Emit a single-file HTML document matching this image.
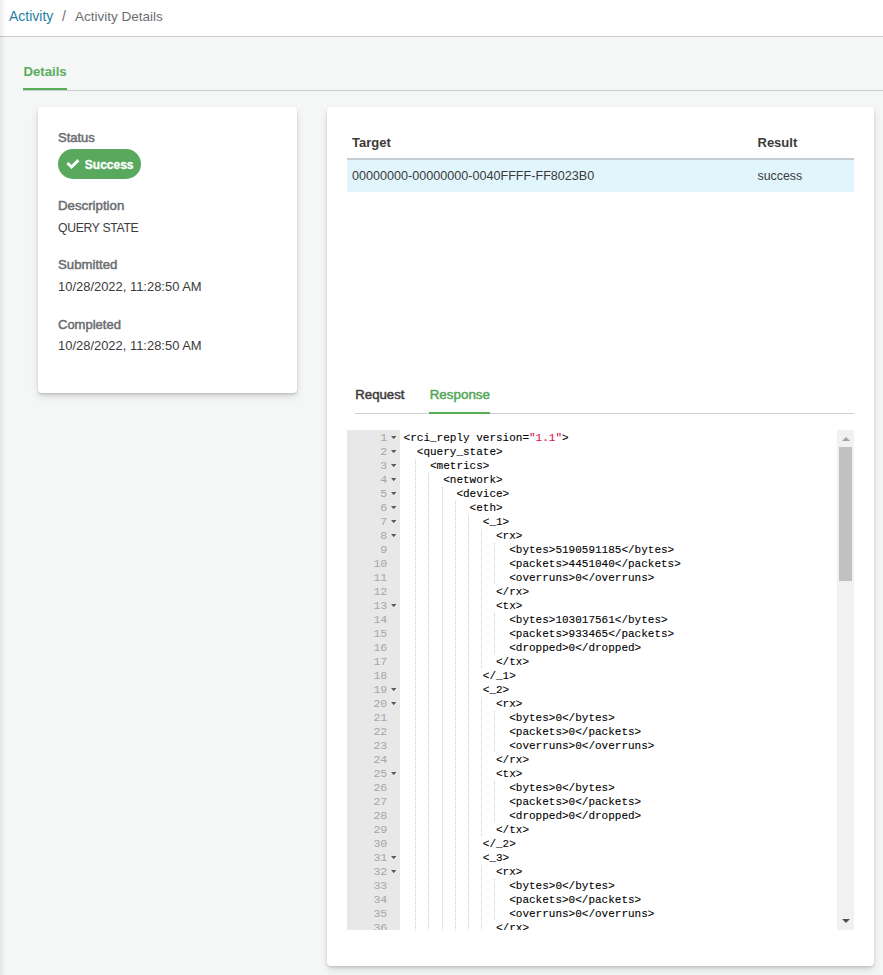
<!DOCTYPE html>
<html><head><meta charset="utf-8"><style>
html,body{margin:0;padding:0}
body{width:883px;height:975px;overflow:hidden;position:relative;background:#f5f6f6;font-family:'Liberation Sans', sans-serif}
.t{position:absolute;white-space:nowrap}
.card{position:absolute;background:#fff;border-radius:4px;box-shadow:0 2px 3px rgba(0,0,0,.1),0 4px 8px rgba(0,0,0,.1),0 1px 2px rgba(0,0,0,.06)}
.ln{position:absolute;left:0;width:40.3px;text-align:right;height:14px;line-height:14px;font-family:'Liberation Mono', monospace;font-size:11.6px;color:#a6a6a6}
.fold{position:absolute;left:44px}
.cl{position:absolute;white-space:pre;height:14px;line-height:14px;font-family:'Liberation Mono', monospace;font-size:11px;color:#000;-webkit-text-stroke-width:0.1px}
.ig{position:absolute;width:1px;height:14px;background-image:linear-gradient(to bottom,#ccc 50%,transparent 50%);background-size:1px 2px;background-position:0 1px}
.lshadow{position:absolute;left:0;top:0;width:6px;height:975px;background:linear-gradient(to right,rgba(0,0,0,.07),rgba(0,0,0,0))}
</style></head><body>
<div style="position:absolute;left:0;top:0;width:883px;height:36px;background:#fff;border-bottom:1px solid #c9ced2"></div><div class="t" style="left:9px;top:7.25px;font-size:14px;line-height:18px;font-weight:normal;color:#1f7ea3;font-family:'Liberation Sans', sans-serif;">Activity</div>
<div class="t" style="left:62px;top:7.25px;font-size:14px;line-height:18px;font-weight:normal;color:#6b6e72;font-family:'Liberation Sans', sans-serif;">/</div>
<div class="t" style="left:75px;top:7.92px;font-size:13.5px;line-height:17px;font-weight:normal;color:#6b6e72;font-family:'Liberation Sans', sans-serif;">Activity Details</div>
<div class="t" style="left:23.4px;top:64.23px;font-size:13.2px;line-height:16px;font-weight:bold;color:#5aad5e;font-family:'Liberation Sans', sans-serif;">Details</div>
<div style="position:absolute;left:23px;top:90px;width:860px;height:1px;background:#c9cdd1"></div><div style="position:absolute;left:23px;top:88px;width:44px;height:2px;background:#55ad5a"></div><div class="card" style="left:38px;top:107px;width:259px;height:286px"></div><div class="t" style="left:58px;top:129.90px;font-size:13px;line-height:16px;font-weight:normal;color:#6a6e72;font-family:'Liberation Sans', sans-serif;-webkit-text-stroke-width:0.5px">Status</div>
<div style="position:absolute;left:58px;top:149px;width:83px;height:30px;border-radius:15px;background:#58a95e"></div><svg style="position:absolute;left:60px;top:155px" width="25" height="20" viewBox="60 155 25 20"><path fill="#fff" d="M68.5 162 L71.5 165 L77.4 159.1 L79.45 161.15 L71.5 169.1 L66.45 164.05 Z"/></svg><div class="t" style="left:84.8px;top:157.64px;font-size:12px;line-height:15px;font-weight:bold;color:#fff;font-family:'Liberation Sans', sans-serif;-webkit-text-stroke-width:0.3px">Success</div>
<div class="t" style="left:58px;top:196.91px;font-size:13.25px;line-height:17px;font-weight:normal;color:#6a6e72;font-family:'Liberation Sans', sans-serif;-webkit-text-stroke-width:0.5px">Description</div>
<div class="t" style="left:58px;top:221.27px;font-size:12.2px;line-height:15px;font-weight:normal;color:#3b3b3b;font-family:'Liberation Sans', sans-serif;letter-spacing:-0.3px">QUERY STATE</div>
<div class="t" style="left:58px;top:257.43px;font-size:13.2px;line-height:16px;font-weight:normal;color:#6a6e72;font-family:'Liberation Sans', sans-serif;-webkit-text-stroke-width:0.5px">Submitted</div>
<div class="t" style="left:58px;top:279.31px;font-size:12.95px;line-height:16px;font-weight:normal;color:#3b3b3b;font-family:'Liberation Sans', sans-serif;">10/28/2022, 11:28:50 AM</div>
<div class="t" style="left:58px;top:316.70px;font-size:13px;line-height:16px;font-weight:normal;color:#6a6e72;font-family:'Liberation Sans', sans-serif;-webkit-text-stroke-width:0.5px">Completed</div>
<div class="t" style="left:58px;top:338.31px;font-size:12.95px;line-height:16px;font-weight:normal;color:#3b3b3b;font-family:'Liberation Sans', sans-serif;">10/28/2022, 11:28:50 AM</div>
<div class="card" style="left:327px;top:107px;width:547px;height:859px"></div><div class="t" style="left:352px;top:135.40px;font-size:13px;line-height:16px;font-weight:bold;color:#3b3b3b;font-family:'Liberation Sans', sans-serif;">Target</div>
<div class="t" style="left:757.5px;top:135.40px;font-size:13px;line-height:16px;font-weight:bold;color:#3b3b3b;font-family:'Liberation Sans', sans-serif;">Result</div>
<div style="position:absolute;left:347px;top:158px;width:507px;height:2px;background:#c6ccd4"></div><div style="position:absolute;left:347px;top:160px;width:507px;height:32px;background:#e1f5fd"></div><div class="t" style="left:352px;top:168.13px;font-size:12.6px;line-height:16px;font-weight:normal;color:#3b3b3b;font-family:'Liberation Sans', sans-serif;">00000000-00000000-0040FFFF-FF8023B0</div>
<div class="t" style="left:757.5px;top:168.20px;font-size:12.4px;line-height:16px;font-weight:normal;color:#3b3b3b;font-family:'Liberation Sans', sans-serif;">success</div>
<div class="t" style="left:355.3px;top:386.83px;font-size:13.2px;line-height:16px;font-weight:normal;color:#3d3d3d;font-family:'Liberation Sans', sans-serif;-webkit-text-stroke-width:0.5px">Request</div>
<div class="t" style="left:429.7px;top:386.26px;font-size:13.4px;line-height:17px;font-weight:normal;color:#53a858;font-family:'Liberation Sans', sans-serif;-webkit-text-stroke-width:0.5px">Response</div>
<div style="position:absolute;left:355px;top:413px;width:499px;height:1px;background:#ccd1d8"></div><div style="position:absolute;left:429px;top:412px;width:61px;height:2px;background:#55ad5a"></div><div style="position:absolute;left:347px;top:430px;width:507px;height:500px;background:#fff;overflow:hidden"><div style="position:absolute;left:0;top:0;width:53px;height:500px;background:#e8e8e8"></div><div class="ln" style="top:0.8px">1</div><svg class="fold" style="top:6px" width="5.4" height="3.2" viewBox="0 0 5.4 3.2"><path d="M0 0H5.4L2.7 3.2Z" fill="#5c5c5c"/></svg><div class="cl" style="top:1px;left:56.60px">&lt;rci_reply version=<span style="color:#d14">"1.1"</span>&gt;</div><div class="ln" style="top:14.8px">2</div><svg class="fold" style="top:20px" width="5.4" height="3.2" viewBox="0 0 5.4 3.2"><path d="M0 0H5.4L2.7 3.2Z" fill="#5c5c5c"/></svg><div class="cl" style="top:15px;left:69.80px">&lt;query_state&gt;</div><div class="ln" style="top:28.8px">3</div><svg class="fold" style="top:34px" width="5.4" height="3.2" viewBox="0 0 5.4 3.2"><path d="M0 0H5.4L2.7 3.2Z" fill="#5c5c5c"/></svg><div class="cl" style="top:29px;left:83.00px">&lt;metrics&gt;</div><div class="ig" style="top:28px;left:68.00px"></div><div class="ln" style="top:42.8px">4</div><svg class="fold" style="top:48px" width="5.4" height="3.2" viewBox="0 0 5.4 3.2"><path d="M0 0H5.4L2.7 3.2Z" fill="#5c5c5c"/></svg><div class="cl" style="top:43px;left:96.20px">&lt;network&gt;</div><div class="ig" style="top:42px;left:68.00px"></div><div class="ig" style="top:42px;left:81.00px"></div><div class="ln" style="top:56.8px">5</div><svg class="fold" style="top:62px" width="5.4" height="3.2" viewBox="0 0 5.4 3.2"><path d="M0 0H5.4L2.7 3.2Z" fill="#5c5c5c"/></svg><div class="cl" style="top:57px;left:109.40px">&lt;device&gt;</div><div class="ig" style="top:56px;left:68.00px"></div><div class="ig" style="top:56px;left:81.00px"></div><div class="ig" style="top:56px;left:95.00px"></div><div class="ln" style="top:70.8px">6</div><svg class="fold" style="top:76px" width="5.4" height="3.2" viewBox="0 0 5.4 3.2"><path d="M0 0H5.4L2.7 3.2Z" fill="#5c5c5c"/></svg><div class="cl" style="top:71px;left:122.60px">&lt;eth&gt;</div><div class="ig" style="top:70px;left:68.00px"></div><div class="ig" style="top:70px;left:81.00px"></div><div class="ig" style="top:70px;left:95.00px"></div><div class="ig" style="top:70px;left:108.00px"></div><div class="ln" style="top:84.8px">7</div><svg class="fold" style="top:90px" width="5.4" height="3.2" viewBox="0 0 5.4 3.2"><path d="M0 0H5.4L2.7 3.2Z" fill="#5c5c5c"/></svg><div class="cl" style="top:85px;left:135.80px">&lt;_1&gt;</div><div class="ig" style="top:84px;left:68.00px"></div><div class="ig" style="top:84px;left:81.00px"></div><div class="ig" style="top:84px;left:95.00px"></div><div class="ig" style="top:84px;left:108.00px"></div><div class="ig" style="top:84px;left:121.00px"></div><div class="ln" style="top:98.8px">8</div><svg class="fold" style="top:104px" width="5.4" height="3.2" viewBox="0 0 5.4 3.2"><path d="M0 0H5.4L2.7 3.2Z" fill="#5c5c5c"/></svg><div class="cl" style="top:99px;left:149.00px">&lt;rx&gt;</div><div class="ig" style="top:98px;left:68.00px"></div><div class="ig" style="top:98px;left:81.00px"></div><div class="ig" style="top:98px;left:95.00px"></div><div class="ig" style="top:98px;left:108.00px"></div><div class="ig" style="top:98px;left:121.00px"></div><div class="ig" style="top:98px;left:134.00px"></div><div class="ln" style="top:112.8px">9</div><div class="cl" style="top:113px;left:162.20px">&lt;bytes&gt;5190591185&lt;/bytes&gt;</div><div class="ig" style="top:112px;left:68.00px"></div><div class="ig" style="top:112px;left:81.00px"></div><div class="ig" style="top:112px;left:95.00px"></div><div class="ig" style="top:112px;left:108.00px"></div><div class="ig" style="top:112px;left:121.00px"></div><div class="ig" style="top:112px;left:134.00px"></div><div class="ig" style="top:112px;left:147.00px"></div><div class="ln" style="top:126.8px">10</div><div class="cl" style="top:127px;left:162.20px">&lt;packets&gt;4451040&lt;/packets&gt;</div><div class="ig" style="top:126px;left:68.00px"></div><div class="ig" style="top:126px;left:81.00px"></div><div class="ig" style="top:126px;left:95.00px"></div><div class="ig" style="top:126px;left:108.00px"></div><div class="ig" style="top:126px;left:121.00px"></div><div class="ig" style="top:126px;left:134.00px"></div><div class="ig" style="top:126px;left:147.00px"></div><div class="ln" style="top:140.8px">11</div><div class="cl" style="top:141px;left:162.20px">&lt;overruns&gt;0&lt;/overruns&gt;</div><div class="ig" style="top:140px;left:68.00px"></div><div class="ig" style="top:140px;left:81.00px"></div><div class="ig" style="top:140px;left:95.00px"></div><div class="ig" style="top:140px;left:108.00px"></div><div class="ig" style="top:140px;left:121.00px"></div><div class="ig" style="top:140px;left:134.00px"></div><div class="ig" style="top:140px;left:147.00px"></div><div class="ln" style="top:154.8px">12</div><div class="cl" style="top:155px;left:149.00px">&lt;/rx&gt;</div><div class="ig" style="top:154px;left:68.00px"></div><div class="ig" style="top:154px;left:81.00px"></div><div class="ig" style="top:154px;left:95.00px"></div><div class="ig" style="top:154px;left:108.00px"></div><div class="ig" style="top:154px;left:121.00px"></div><div class="ig" style="top:154px;left:134.00px"></div><div class="ln" style="top:168.8px">13</div><svg class="fold" style="top:174px" width="5.4" height="3.2" viewBox="0 0 5.4 3.2"><path d="M0 0H5.4L2.7 3.2Z" fill="#5c5c5c"/></svg><div class="cl" style="top:169px;left:149.00px">&lt;tx&gt;</div><div class="ig" style="top:168px;left:68.00px"></div><div class="ig" style="top:168px;left:81.00px"></div><div class="ig" style="top:168px;left:95.00px"></div><div class="ig" style="top:168px;left:108.00px"></div><div class="ig" style="top:168px;left:121.00px"></div><div class="ig" style="top:168px;left:134.00px"></div><div class="ln" style="top:182.8px">14</div><div class="cl" style="top:183px;left:162.20px">&lt;bytes&gt;103017561&lt;/bytes&gt;</div><div class="ig" style="top:182px;left:68.00px"></div><div class="ig" style="top:182px;left:81.00px"></div><div class="ig" style="top:182px;left:95.00px"></div><div class="ig" style="top:182px;left:108.00px"></div><div class="ig" style="top:182px;left:121.00px"></div><div class="ig" style="top:182px;left:134.00px"></div><div class="ig" style="top:182px;left:147.00px"></div><div class="ln" style="top:196.8px">15</div><div class="cl" style="top:197px;left:162.20px">&lt;packets&gt;933465&lt;/packets&gt;</div><div class="ig" style="top:196px;left:68.00px"></div><div class="ig" style="top:196px;left:81.00px"></div><div class="ig" style="top:196px;left:95.00px"></div><div class="ig" style="top:196px;left:108.00px"></div><div class="ig" style="top:196px;left:121.00px"></div><div class="ig" style="top:196px;left:134.00px"></div><div class="ig" style="top:196px;left:147.00px"></div><div class="ln" style="top:210.8px">16</div><div class="cl" style="top:211px;left:162.20px">&lt;dropped&gt;0&lt;/dropped&gt;</div><div class="ig" style="top:210px;left:68.00px"></div><div class="ig" style="top:210px;left:81.00px"></div><div class="ig" style="top:210px;left:95.00px"></div><div class="ig" style="top:210px;left:108.00px"></div><div class="ig" style="top:210px;left:121.00px"></div><div class="ig" style="top:210px;left:134.00px"></div><div class="ig" style="top:210px;left:147.00px"></div><div class="ln" style="top:224.8px">17</div><div class="cl" style="top:225px;left:149.00px">&lt;/tx&gt;</div><div class="ig" style="top:224px;left:68.00px"></div><div class="ig" style="top:224px;left:81.00px"></div><div class="ig" style="top:224px;left:95.00px"></div><div class="ig" style="top:224px;left:108.00px"></div><div class="ig" style="top:224px;left:121.00px"></div><div class="ig" style="top:224px;left:134.00px"></div><div class="ln" style="top:238.8px">18</div><div class="cl" style="top:239px;left:135.80px">&lt;/_1&gt;</div><div class="ig" style="top:238px;left:68.00px"></div><div class="ig" style="top:238px;left:81.00px"></div><div class="ig" style="top:238px;left:95.00px"></div><div class="ig" style="top:238px;left:108.00px"></div><div class="ig" style="top:238px;left:121.00px"></div><div class="ln" style="top:252.8px">19</div><svg class="fold" style="top:258px" width="5.4" height="3.2" viewBox="0 0 5.4 3.2"><path d="M0 0H5.4L2.7 3.2Z" fill="#5c5c5c"/></svg><div class="cl" style="top:253px;left:135.80px">&lt;_2&gt;</div><div class="ig" style="top:252px;left:68.00px"></div><div class="ig" style="top:252px;left:81.00px"></div><div class="ig" style="top:252px;left:95.00px"></div><div class="ig" style="top:252px;left:108.00px"></div><div class="ig" style="top:252px;left:121.00px"></div><div class="ln" style="top:266.8px">20</div><svg class="fold" style="top:272px" width="5.4" height="3.2" viewBox="0 0 5.4 3.2"><path d="M0 0H5.4L2.7 3.2Z" fill="#5c5c5c"/></svg><div class="cl" style="top:267px;left:149.00px">&lt;rx&gt;</div><div class="ig" style="top:266px;left:68.00px"></div><div class="ig" style="top:266px;left:81.00px"></div><div class="ig" style="top:266px;left:95.00px"></div><div class="ig" style="top:266px;left:108.00px"></div><div class="ig" style="top:266px;left:121.00px"></div><div class="ig" style="top:266px;left:134.00px"></div><div class="ln" style="top:280.8px">21</div><div class="cl" style="top:281px;left:162.20px">&lt;bytes&gt;0&lt;/bytes&gt;</div><div class="ig" style="top:280px;left:68.00px"></div><div class="ig" style="top:280px;left:81.00px"></div><div class="ig" style="top:280px;left:95.00px"></div><div class="ig" style="top:280px;left:108.00px"></div><div class="ig" style="top:280px;left:121.00px"></div><div class="ig" style="top:280px;left:134.00px"></div><div class="ig" style="top:280px;left:147.00px"></div><div class="ln" style="top:294.8px">22</div><div class="cl" style="top:295px;left:162.20px">&lt;packets&gt;0&lt;/packets&gt;</div><div class="ig" style="top:294px;left:68.00px"></div><div class="ig" style="top:294px;left:81.00px"></div><div class="ig" style="top:294px;left:95.00px"></div><div class="ig" style="top:294px;left:108.00px"></div><div class="ig" style="top:294px;left:121.00px"></div><div class="ig" style="top:294px;left:134.00px"></div><div class="ig" style="top:294px;left:147.00px"></div><div class="ln" style="top:308.8px">23</div><div class="cl" style="top:309px;left:162.20px">&lt;overruns&gt;0&lt;/overruns&gt;</div><div class="ig" style="top:308px;left:68.00px"></div><div class="ig" style="top:308px;left:81.00px"></div><div class="ig" style="top:308px;left:95.00px"></div><div class="ig" style="top:308px;left:108.00px"></div><div class="ig" style="top:308px;left:121.00px"></div><div class="ig" style="top:308px;left:134.00px"></div><div class="ig" style="top:308px;left:147.00px"></div><div class="ln" style="top:322.8px">24</div><div class="cl" style="top:323px;left:149.00px">&lt;/rx&gt;</div><div class="ig" style="top:322px;left:68.00px"></div><div class="ig" style="top:322px;left:81.00px"></div><div class="ig" style="top:322px;left:95.00px"></div><div class="ig" style="top:322px;left:108.00px"></div><div class="ig" style="top:322px;left:121.00px"></div><div class="ig" style="top:322px;left:134.00px"></div><div class="ln" style="top:336.8px">25</div><svg class="fold" style="top:342px" width="5.4" height="3.2" viewBox="0 0 5.4 3.2"><path d="M0 0H5.4L2.7 3.2Z" fill="#5c5c5c"/></svg><div class="cl" style="top:337px;left:149.00px">&lt;tx&gt;</div><div class="ig" style="top:336px;left:68.00px"></div><div class="ig" style="top:336px;left:81.00px"></div><div class="ig" style="top:336px;left:95.00px"></div><div class="ig" style="top:336px;left:108.00px"></div><div class="ig" style="top:336px;left:121.00px"></div><div class="ig" style="top:336px;left:134.00px"></div><div class="ln" style="top:350.8px">26</div><div class="cl" style="top:351px;left:162.20px">&lt;bytes&gt;0&lt;/bytes&gt;</div><div class="ig" style="top:350px;left:68.00px"></div><div class="ig" style="top:350px;left:81.00px"></div><div class="ig" style="top:350px;left:95.00px"></div><div class="ig" style="top:350px;left:108.00px"></div><div class="ig" style="top:350px;left:121.00px"></div><div class="ig" style="top:350px;left:134.00px"></div><div class="ig" style="top:350px;left:147.00px"></div><div class="ln" style="top:364.8px">27</div><div class="cl" style="top:365px;left:162.20px">&lt;packets&gt;0&lt;/packets&gt;</div><div class="ig" style="top:364px;left:68.00px"></div><div class="ig" style="top:364px;left:81.00px"></div><div class="ig" style="top:364px;left:95.00px"></div><div class="ig" style="top:364px;left:108.00px"></div><div class="ig" style="top:364px;left:121.00px"></div><div class="ig" style="top:364px;left:134.00px"></div><div class="ig" style="top:364px;left:147.00px"></div><div class="ln" style="top:378.8px">28</div><div class="cl" style="top:379px;left:162.20px">&lt;dropped&gt;0&lt;/dropped&gt;</div><div class="ig" style="top:378px;left:68.00px"></div><div class="ig" style="top:378px;left:81.00px"></div><div class="ig" style="top:378px;left:95.00px"></div><div class="ig" style="top:378px;left:108.00px"></div><div class="ig" style="top:378px;left:121.00px"></div><div class="ig" style="top:378px;left:134.00px"></div><div class="ig" style="top:378px;left:147.00px"></div><div class="ln" style="top:392.8px">29</div><div class="cl" style="top:393px;left:149.00px">&lt;/tx&gt;</div><div class="ig" style="top:392px;left:68.00px"></div><div class="ig" style="top:392px;left:81.00px"></div><div class="ig" style="top:392px;left:95.00px"></div><div class="ig" style="top:392px;left:108.00px"></div><div class="ig" style="top:392px;left:121.00px"></div><div class="ig" style="top:392px;left:134.00px"></div><div class="ln" style="top:406.8px">30</div><div class="cl" style="top:407px;left:135.80px">&lt;/_2&gt;</div><div class="ig" style="top:406px;left:68.00px"></div><div class="ig" style="top:406px;left:81.00px"></div><div class="ig" style="top:406px;left:95.00px"></div><div class="ig" style="top:406px;left:108.00px"></div><div class="ig" style="top:406px;left:121.00px"></div><div class="ln" style="top:420.8px">31</div><svg class="fold" style="top:426px" width="5.4" height="3.2" viewBox="0 0 5.4 3.2"><path d="M0 0H5.4L2.7 3.2Z" fill="#5c5c5c"/></svg><div class="cl" style="top:421px;left:135.80px">&lt;_3&gt;</div><div class="ig" style="top:420px;left:68.00px"></div><div class="ig" style="top:420px;left:81.00px"></div><div class="ig" style="top:420px;left:95.00px"></div><div class="ig" style="top:420px;left:108.00px"></div><div class="ig" style="top:420px;left:121.00px"></div><div class="ln" style="top:434.8px">32</div><svg class="fold" style="top:440px" width="5.4" height="3.2" viewBox="0 0 5.4 3.2"><path d="M0 0H5.4L2.7 3.2Z" fill="#5c5c5c"/></svg><div class="cl" style="top:435px;left:149.00px">&lt;rx&gt;</div><div class="ig" style="top:434px;left:68.00px"></div><div class="ig" style="top:434px;left:81.00px"></div><div class="ig" style="top:434px;left:95.00px"></div><div class="ig" style="top:434px;left:108.00px"></div><div class="ig" style="top:434px;left:121.00px"></div><div class="ig" style="top:434px;left:134.00px"></div><div class="ln" style="top:448.8px">33</div><div class="cl" style="top:449px;left:162.20px">&lt;bytes&gt;0&lt;/bytes&gt;</div><div class="ig" style="top:448px;left:68.00px"></div><div class="ig" style="top:448px;left:81.00px"></div><div class="ig" style="top:448px;left:95.00px"></div><div class="ig" style="top:448px;left:108.00px"></div><div class="ig" style="top:448px;left:121.00px"></div><div class="ig" style="top:448px;left:134.00px"></div><div class="ig" style="top:448px;left:147.00px"></div><div class="ln" style="top:462.8px">34</div><div class="cl" style="top:463px;left:162.20px">&lt;packets&gt;0&lt;/packets&gt;</div><div class="ig" style="top:462px;left:68.00px"></div><div class="ig" style="top:462px;left:81.00px"></div><div class="ig" style="top:462px;left:95.00px"></div><div class="ig" style="top:462px;left:108.00px"></div><div class="ig" style="top:462px;left:121.00px"></div><div class="ig" style="top:462px;left:134.00px"></div><div class="ig" style="top:462px;left:147.00px"></div><div class="ln" style="top:476.8px">35</div><div class="cl" style="top:477px;left:162.20px">&lt;overruns&gt;0&lt;/overruns&gt;</div><div class="ig" style="top:476px;left:68.00px"></div><div class="ig" style="top:476px;left:81.00px"></div><div class="ig" style="top:476px;left:95.00px"></div><div class="ig" style="top:476px;left:108.00px"></div><div class="ig" style="top:476px;left:121.00px"></div><div class="ig" style="top:476px;left:134.00px"></div><div class="ig" style="top:476px;left:147.00px"></div><div class="ln" style="top:490.8px">36</div><div class="cl" style="top:491px;left:149.00px">&lt;/rx&gt;</div><div class="ig" style="top:490px;left:68.00px"></div><div class="ig" style="top:490px;left:81.00px"></div><div class="ig" style="top:490px;left:95.00px"></div><div class="ig" style="top:490px;left:108.00px"></div><div class="ig" style="top:490px;left:121.00px"></div><div class="ig" style="top:490px;left:134.00px"></div><div style="position:absolute;left:490px;top:0;width:17px;height:500px;background:#f1f1f1"></div><div style="position:absolute;left:492px;top:17px;width:13px;height:134px;background:#c1c1c1"></div><div style="position:absolute;left:494.8px;top:6.7px;width:0;height:0;border-left:4px solid transparent;border-right:4px solid transparent;border-bottom:4.3px solid #a3a3a3"></div><div style="position:absolute;left:494.8px;top:488.8px;width:0;height:0;border-left:4px solid transparent;border-right:4px solid transparent;border-top:4.3px solid #505050"></div></div>
<div class="lshadow"></div>
</body></html>
